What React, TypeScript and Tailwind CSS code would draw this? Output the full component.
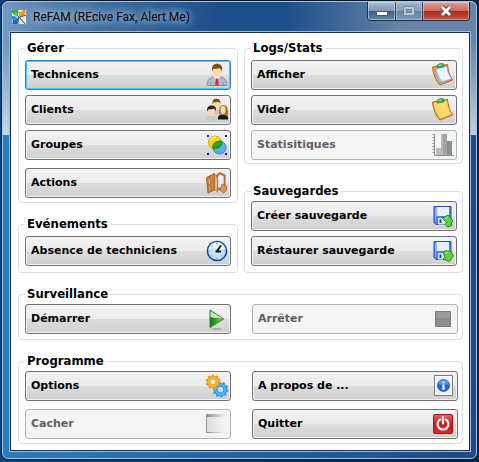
import type { ReactNode } from "react";
import clsx from "clsx";

const Icon = ({ children }: { children: ReactNode }) => (
  <svg viewBox="0 0 24 24" className="h-6 w-6 shrink-0" aria-hidden="true">
    {children}
  </svg>
);

const TechnicianIcon = () => (
  <Icon>
    <path d="M2 22.500c0-5.500 3-8 7-9h6c4 1 7 3.500 7 9z" fill="#b4b8cf" stroke="#7d829e" strokeWidth=".8" />
    <path d="M8.500 13.500L12 17l3.500-3.500v-1.500h-7z" fill="#f4f4fa" />
    <path d="M11 15.500h2l.8 7h-3.600z" fill="#e0262e" />
    <path d="M5.500 19v3.500M18.500 19v3.500" stroke="#878cab" strokeWidth=".8" />
    <ellipse cx="12" cy="8.500" rx="4.200" ry="5.200" fill="#fbd9a8" />
    <path d="M7.300 8.500C6 3 9 .8 12 .8S18.300 3 16.800 8.500c-.6-2-1.600-3-2.800-3.500-2 1-4.500 1-5.500.8-.6.700-.9 1.500-1.200 2.700z" fill="#7b5212" />
  </Icon>
);

const ClientsIcon = () => (
  <Icon>
    <path d="M7 17c0-4 2-5.500 5-5.500s5 1.500 5 5.500z" fill="#c4c8da" />
    <ellipse cx="11.500" cy="6.500" rx="3.500" ry="4.500" fill="#fbd9a8" />
    <path d="M7.500 6C7 2 9 .8 11.500.8S16 2 15.400 6.200c-.5-1.500-1.300-2-2-2.400-1.800.8-4 .4-4.700.5z" fill="#7b5212" />
    <path d="M12.800 21.500c0-4 1.500-5 5.200-5s5.200 1 5.200 5z" fill="#17171c" />
    <path d="M14 15c-.5-5 1-8 4.500-8s5 3 4.400 10.500h-2.400l-4.500-1z" fill="#b07325" />
    <ellipse cx="18" cy="12" rx="2.500" ry="4" fill="#fdd9a5" />
    <path d="M1 23c0-3.500 2-5.500 5.500-5.500S12 19.500 12 23z" fill="#b9d3ba" />
    <ellipse cx="6.500" cy="13.500" rx="3.600" ry="4.500" fill="#fbd3b2" />
    <path d="M2.200 13.500C1.500 9 4 7.500 6.600 7.500s5.200 1.500 4.300 6c-.5-1.600-1.300-2.500-2.300-2.900-2 .9-4 .6-4.900.7z" fill="#2d2424" />
  </Icon>
);

const GroupsIcon = () => (
  <Icon>
    <circle cx="14.500" cy="14.500" r="6.500" fill="#58b0f6" stroke="#2f86dc" />
    <circle cx="10" cy="9.500" r="6.500" fill="#ffd60a" stroke="#d5a400" />
    <path d="M8 15.500c-.9-4.500 1.800-7.500 8.400-7.500C17.500 12 15 16 8 15.500z" fill="#20a628" stroke="#118018" />
    <path d="M6 7c1-2 3-3 5-2.800" stroke="#fff09a" strokeWidth="1.500" fill="none" />
    <path d="M2 2h2v2H2zM20 2h2v2h-2zM2 20h2v2H2zM20 20h2v2h-2z" fill="#1010e8" />
  </Icon>
);

const ActionsIcon = () => (
  <Icon>
    <path d="M11 5l3.500-3.500L20 4v14l-7 1z" fill="#d58234" stroke="#a3612a" />
    <path d="M12.500 6l2-3 4.500 2v11l-6 1.500z" fill="#e5edf5" stroke="#a3612a" strokeWidth=".6" />
    <path d="M1.500 6.500l8-4v16.500l-6.500 3z" fill="#cf8140" stroke="#a3612a" />
    <path d="M3.200 8l2.300-1.200v6L3.500 14zM3.800 15.500l2-1.100v5l-1.700 1zM9.500 2.500l3 5v14l-3-4z" fill="#eab47e" stroke="#a3612a" strokeWidth=".6" />
    <path d="M17 13l4.500 2v4.500l-3 2.500-3.500-3z" fill="#d99352" stroke="#a3612a" strokeWidth=".7" />
  </Icon>
);

const ClipboardIcon = ({ paper }: { paper?: boolean }) => (
  <Icon>
    <path d="M1.500 4l15-2.500c.5 6 2 11 5 15.500L9 22C5 18 2 11 1.500 4z" fill="#f7ad31" stroke="#c6551b" strokeLinejoin="round" />
    {paper ? (
      <>
        <path d="M4 5l12-2c.5 5 2 9 5 13L9.500 20C6.500 16 4.500 11 4 5z" fill="#a9c4f2" stroke="#7698d2" strokeWidth=".8" />
        <path d="M6 5.500l9.500-1.500c.6 4.500 2 8 4.500 11.500l-8.500 2.800C8.500 14.500 6.500 10.500 6 5.500z" fill="#edf4ff" />
      </>
    ) : (
      <path d="M3 5l13-2c.5 5 2 9 4.500 13L9.500 20.500C6 16 3.700 11 3 5z" fill="#ffda68" />
    )}
    <path d="M6.500 5.200L6 2.500l3-2 3.500.3.500 3z" fill="#38b44e" stroke="#188530" strokeWidth=".7" />
    <path d="M7.500 2.500l3-.8" stroke="#b1edb5" />
  </Icon>
);

const ChartIcon = () => (
  <Icon>
    <path d="M3.500 1v21.500H23M1.500 1.500h2M1.500 4.500h2M1.500 7.500h2M1.500 10.500h2M1.500 13.500h2M1.500 16.500h2M1.500 19.500h2" stroke="#8c8c8c" fill="none" />
    <path d="M5 15h5v7H5z" fill="#bdbdbd" />
    <path d="M10 1h6v21h-6z" fill="#a2a2a2" />
    <path d="M16 8h5v14h-5z" fill="#8e8e8e" />
    <path d="M10 1h2v21h-2z" fill="#b8b8b8" />
  </Icon>
);

const ClockIcon = () => (
  <Icon>
    <circle cx="12" cy="12" r="9.600" fill="#bfe4fb" stroke="#1745a6" strokeWidth="1.500" />
    <path d="M4 11a8 8 0 0 1 16 0c-5-2-11-2-16 0z" fill="#e9f8ff" />
    <path d="M12 3.500v2M12 18.500v2M3.500 12h2M18.500 12h2M6.500 6.500l1 1M17.500 17.500l-1-1M6.500 17.500l1-1" stroke="#6c9fd8" strokeWidth="1.200" />
    <path d="M16 6.500l-4.500 6M10.500 12.500h5.500" stroke="#101010" strokeWidth="1.800" fill="none" />
  </Icon>
);

const DiskIcon = ({ up }: { up?: boolean }) => (
  <Icon>
    <path d="M3 2.500h17v18H5l-2-2z" fill="#4b7fe6" stroke="#2450b4" />
    <path d="M5.500 3H18v9H5.500z" fill="#e6f0fd" />
    <path d="M4.500 4v14" stroke="#8fb5f8" />
    <path d="M7 14h10v6.500H7z" fill="#dfe5ef" />
    <path d="M8.500 15.500h2v3.500h-2z" fill="#2b4d9c" />
    {up ? (
      <path d="M11.500 14l5.500-3 5 6-1.500 1 .5 3.500-4.500 1.500-2.500-2.500 1.500-2z" fill="#5cd43b" stroke="#218a18" strokeLinejoin="round" />
    ) : (
      <path d="M12 13.500l3-2 2 1 2-1 3.500 5.500-4.500 5.500-6-2.500 2-2z" fill="#5cd43b" stroke="#218a18" strokeLinejoin="round" />
    )}
    <path d="M14.500 14.500l2.500-1.500" stroke="#c5f5a7" />
  </Icon>
);

const PlayIcon = () => (
  <Icon>
    <defs>
      <linearGradient id="play" x1="0" x2="1">
        <stop offset="0" stopColor="#067a0c" />
        <stop offset="1" stopColor="#7be046" />
      </linearGradient>
    </defs>
    <ellipse cx="12" cy="22" rx="5" ry="1" fill="#a9a9a9" />
    <path d="M5 3v17.500L18.500 12z" fill="url(#play)" stroke="#3c7a3a" />
    <path d="M5.500 4v6c4 1.500 8 .8 11.500 1.300z" fill="#c3e8bd" />
  </Icon>
);

const StopIcon = () => (
  <Icon>
    <path d="M3.500 4.500h15v15h-15z" fill="#8d8d8d" stroke="#7b7b7b" />
    <path d="M4 5h14v6H4z" fill="#9b9b9b" />
  </Icon>
);

const GearsIcon = () => (
  <Icon>
    <circle cx="15.500" cy="15.500" r="4.800" fill="none" stroke="#2c9ce9" strokeWidth="4" />
    <circle cx="15.500" cy="15.500" r="6.900" fill="none" stroke="#2c9ce9" strokeWidth="2" strokeDasharray="2.200 2.130" />
    <circle cx="15.500" cy="15.500" r="4.800" fill="none" stroke="#79caff" />
    <circle cx="8" cy="7.800" r="4.400" fill="none" stroke="#f4a51a" strokeWidth="3.800" />
    <circle cx="8" cy="7.800" r="6.300" fill="none" stroke="#e8920e" strokeWidth="2" strokeDasharray="2 1.960" />
    <circle cx="8" cy="7.800" r="4.400" fill="none" stroke="#ffc84a" />
  </Icon>
);

const HideIcon = () => (
  <Icon>
    <defs>
      <linearGradient id="hide" x1="0" x2="1">
        <stop offset="0" stopColor="#8d8d8d" />
        <stop offset="1" stopColor="#f3f3f3" />
      </linearGradient>
      <linearGradient id="hideBody" x1="0" x2="1">
        <stop offset="0" stopColor="#dedede" />
        <stop offset="1" stopColor="#f4f4f4" />
      </linearGradient>
    </defs>
    <path d="M1 2h19v19H1z" fill="url(#hide)" />
    <path d="M2 5h19v15H2z" fill="url(#hideBody)" />
  </Icon>
);

const InfoIcon = () => (
  <Icon>
    <path d="M2.500 1.500h18v20h-18z" fill="#f0f0f0" stroke="#777" />
    <path d="M3.500 2.500h16v18h-16z" fill="none" stroke="#fff" />
    <circle cx="11.500" cy="11.500" r="6" fill="#1f63ea" stroke="#1746ba" strokeWidth=".7" />
    <path d="M6.500 10.500a5 4.500 0 0 1 10 0z" fill="#5b93fa" />
    <path d="M10.500 7.500h2v1.800h-2zM10 10.500h2.500v4h.7v1h-3.400v-1h.7v-3H10z" fill="#fff" />
  </Icon>
);

const PowerIcon = () => (
  <Icon>
    <defs>
      <linearGradient id="power" x1="0" x2="0" y1="0" y2="1">
        <stop offset="0" stopColor="#e2676a" />
        <stop offset=".5" stopColor="#cf1a20" />
        <stop offset="1" stopColor="#d8262a" />
      </linearGradient>
    </defs>
    <rect x="1.500" y="2.500" width="19" height="19" rx="1.500" fill="url(#power)" stroke="#a51318" />
    <path d="M8 7.600a5.400 5.400 0 1 0 6 0" fill="none" stroke="#fff" strokeWidth="2.200" strokeLinecap="round" />
    <path d="M11 5v6.500" stroke="#fff" strokeWidth="2.200" strokeLinecap="round" />
  </Icon>
);

const AppIcon = () => (
  <svg viewBox="0 0 16 16" className="h-4 w-4 shrink-0" aria-hidden="true">
    <path d="M0 0h16v16H0z" fill="#e6eaee" />
    <path d="M1 1h6v4L5 7 1 4z" fill="#39ad35" />
    <path d="M7 2l3 1.500 2-3 3 1-2 5-5 1z" fill="#e99a24" />
    <path d="M0 7l4 .5 3 2-1 6H1l1-4z" fill="#1763c6" />
    <path d="M6 6l3 3 5 6M9 8l6-2M7.500 8L7 15" stroke="#45475a" fill="none" />
    <path d="M2 8l2 3M5 3v7" stroke="#44d1e6" />
    <path d="M.5.500h15v15H.5z" stroke="#8793a1" fill="none" />
  </svg>
);

interface MenuButtonProps {
  label: string;
  icon: ReactNode;
  disabled?: boolean;
  focused?: boolean;
}

const MenuButton = ({ label, icon, disabled, focused }: MenuButtonProps) => (
  <button
    type="button"
    disabled={disabled}
    className={clsx(
      "flex h-[30px] w-full items-center justify-between rounded-[3px] border pr-px pl-[5px] text-left text-[11px] leading-4 font-bold whitespace-nowrap",
      disabled && "border-[#adb2b5] bg-[#f4f4f4] text-[#5f5f5f]",
      !disabled && "bg-[linear-gradient(#f2f2f2_0%,#ebebeb_49%,#dddddd_50%,#cfcfcf_100%)] text-black",
      !disabled && !focused && "border-[#707070] inset-ring inset-ring-[#f3f3f3]",
      focused && "border-[#3c7fb1] inset-ring inset-ring-[#48c9f2]"
    )}
  >
    <span>{label}</span>
    {icon}
  </button>
);

const Group = ({ title, className, children }: { title: string; className?: string; children: ReactNode }) => (
  <fieldset className={clsx("min-w-0 rounded-[4px] border border-[#d5dfe5] pl-1.5", className)}>
    <legend className="h-4 px-0.5 font-['DejaVu_Sans_Condensed','DejaVu_Sans',sans-serif] text-[13px] leading-4 font-bold text-black">
      {title}
    </legend>
    {children}
  </fieldset>
);

const TitleBar = () => (
  <header className="flex h-[29px] items-start justify-between pl-0.5">
    <div className="flex h-[29px] items-center gap-1.5">
      <AppIcon />
      <h1 className="font-[Roboto,sans-serif] text-xs leading-6 whitespace-nowrap text-black [text-shadow:0_0_6px_rgba(200,218,236,0.8),0_0_10px_rgba(200,218,236,0.8),0_0_14px_rgba(200,218,236,0.7)]">
        ReFAM (REcive Fax, Alert Me)
      </h1>
    </div>
    <div className="mr-px flex h-[19px] overflow-hidden rounded-b-[4px] border border-t-0 border-[#1c2f4a]">
      <button
        type="button"
        aria-label="Réduire"
        className="flex w-7 items-center justify-center border-r border-[#2b4363] bg-[linear-gradient(#a9bbd0_0%,#8199b6_48%,#3c5f8a_50%,#6385ab_100%)] inset-ring inset-ring-white/40"
      >
        <svg viewBox="0 0 12 12" className="h-3 w-3">
          <path d="M.5 6.500h11v4H.5z" fill="#fff" stroke="#4a5566" />
        </svg>
      </button>
      <button
        type="button"
        aria-label="Agrandir"
        disabled
        className="flex w-[27px] items-center justify-center border-r border-[#2b4363] bg-[linear-gradient(#9fb1c7_0%,#8ba1bb_48%,#6582a5_50%,#7d98b7_100%)] inset-ring inset-ring-white/30"
      >
        <svg viewBox="0 0 12 12" className="h-3 w-3">
          <path d="M2 3h8v6H2z" fill="none" stroke="#b9c6d5" strokeWidth="2" />
          <path d="M.5 1.500h11v9H.5zM3.500 4.500h5v3h-5z" fill="none" stroke="#7289a5" />
        </svg>
      </button>
      <button
        type="button"
        aria-label="Fermer"
        className="flex w-[46px] items-center justify-center bg-[linear-gradient(#dfa097_0%,#c96d5f_48%,#a92b1a_50%,#c5523f_100%)] inset-ring inset-ring-white/40"
      >
        <svg viewBox="0 0 12 12" className="h-3 w-3">
          <path d="M2 2l8 8M10 2l-8 8" stroke="#4d4f5d" strokeWidth="4.600" />
          <path d="M2 2l8 8M10 2l-8 8" stroke="#fff" strokeWidth="2.800" />
        </svg>
      </button>
    </div>
  </header>
);

export default function App() {
  return (
    <div className="min-h-screen bg-[linear-gradient(90deg,#08457f,#06254c)] pr-px pl-px font-['DejaVu_Sans',sans-serif]">
      <div className="rounded-[7px] border border-[#0b1727] bg-[#1d5594]">
        <div className="rounded-[6px] border border-[#a9c4de] bg-[linear-gradient(180deg,rgba(255,255,255,0)_40px,rgba(255,255,255,0.6)_133px,rgba(255,255,255,0)_133px),linear-gradient(90deg,#7199c4_0%,#4b79ac_12%,#1c508d_45%,#1c508d_60%,#6885a8_85%,#6885a8_100%),linear-gradient(90deg,#2a7cbf,#1a4a87)] bg-[length:100%_100%,100%_133px,100%_100%] bg-no-repeat pr-[5px] pb-1.5 pl-1.5">
          <TitleBar />
          <div className="border border-[#9fbbd8]">
            <main className="flex flex-col gap-[13px] border border-[#16314f] bg-white pt-[7px] pr-1.5 pb-1.5 pl-[7px]">
              <div className="grid grid-cols-[220fr_219fr] gap-x-1.5">
                <div className="flex flex-col justify-between gap-[13px]">
                  <Group title="Gérer" className="pt-1 pr-1.5 pb-1">
                    <div className="flex flex-col gap-[5px]">
                      <MenuButton label="Technicens" icon={<TechnicianIcon />} focused />
                      <MenuButton label="Clients" icon={<ClientsIcon />} />
                      <MenuButton label="Groupes" icon={<GroupsIcon />} />
                    </div>
                    <div className="mt-2">
                      <MenuButton label="Actions" icon={<ActionsIcon />} />
                    </div>
                  </Group>
                  <Group title="Evénements" className="pt-1 pr-1.5 pb-1.5">
                    <MenuButton label="Absence de techniciens" icon={<ClockIcon />} />
                  </Group>
                </div>
                <div className="flex flex-col justify-between gap-[13px]">
                  <Group title="Logs/Stats" className="pt-1 pr-[5px] pb-[3px]">
                    <div className="flex flex-col gap-[5px]">
                      <MenuButton label="Afficher" icon={<ClipboardIcon paper />} />
                      <MenuButton label="Vider" icon={<ClipboardIcon />} />
                      <MenuButton label="Statisitiques" icon={<ChartIcon />} disabled />
                    </div>
                  </Group>
                  <Group title="Sauvegardes" className="pt-0.5 pr-[5px] pb-1.5">
                    <div className="flex flex-col gap-[5px]">
                      <MenuButton label="Créer sauvegarde" icon={<DiskIcon up />} />
                      <MenuButton label="Réstaurer sauvegarde" icon={<DiskIcon />} />
                    </div>
                  </Group>
                </div>
              </div>
              <Group title="Surveillance" className="pt-0.5 pr-1 pb-[5px]">
                <div className="grid grid-cols-2 gap-x-[21px]">
                  <MenuButton label="Démarrer" icon={<PlayIcon />} />
                  <MenuButton label="Arrêter" icon={<StopIcon />} disabled />
                </div>
              </Group>
              <Group title="Programme" className="pt-0.5 pr-1 pb-1">
                <div className="grid grid-cols-2 gap-x-[21px] gap-y-2">
                  <MenuButton label="Options" icon={<GearsIcon />} />
                  <MenuButton label="A propos de ..." icon={<InfoIcon />} />
                  <MenuButton label="Cacher" icon={<HideIcon />} disabled />
                  <MenuButton label="Quitter" icon={<PowerIcon />} />
                </div>
              </Group>
            </main>
          </div>
        </div>
      </div>
    </div>
  );
}
